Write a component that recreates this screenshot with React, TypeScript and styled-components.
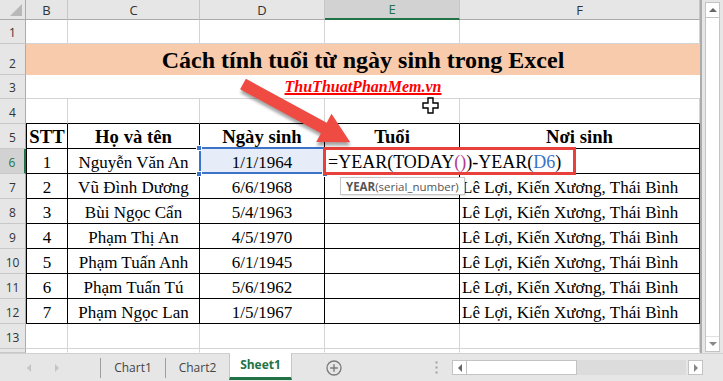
import React from 'react';
import styled, { createGlobalStyle, css } from 'styled-components';

const GRID = '#d4d4d4';
const HEAD_LINE = '#ababab';
const GREEN = '#217346';
const REF_BLUE = '#3b73c9';
const MARK_RED = '#e8403b';

const GlobalStyle = createGlobalStyle`
  html, body {
    margin: 0;
    padding: 0;
  }
  body {
    background: #e6e6e6;
    overflow: hidden;
  }
  * {
    box-sizing: border-box;
  }
`;

const Window = styled.div`
  display: flex;
  flex-direction: column;
  width: 723px;
  height: 381px;
  overflow: hidden;
  background: #e6e6e6;
`;

const Workspace = styled.div`
  display: flex;
  height: 353px;
`;

const Sheet = styled.div`
  position: relative;
  display: grid;
  grid-template-columns: 26px 42px 132px 125px 135px 240px;
  grid-template-rows: 20px 24px 31px 24px 25px repeat(8, 25px) 25px 4px;
  width: 702px;
  height: 353px;
  background: #fff;
  border-right: 2px solid ${HEAD_LINE};
  overflow: hidden;
`;

const Corner = styled.div`
  background: #e6e6e6;
  border-right: 1px solid ${HEAD_LINE};
  border-bottom: 1px solid ${HEAD_LINE};
`;

const ColHead = styled.div<{ $active?: boolean }>`
  display: flex;
  align-items: center;
  justify-content: center;
  background: ${(p) => (p.$active ? '#d2d2d2' : '#e6e6e6')};
  border-right: 1px solid #c6c6c6;
  border-bottom: ${(p) => (p.$active ? `2px solid ${GREEN}` : `1px solid ${HEAD_LINE}`)};
  color: ${(p) => (p.$active ? GREEN : '#333')};
  font-family: 'Open Sans', 'Noto Sans', sans-serif;
  font-size: 13px;
`;

const RowHead = styled.div<{ $active?: boolean }>`
  display: flex;
  align-items: flex-end;
  justify-content: center;
  padding-bottom: 2px;
  background: ${(p) => (p.$active ? '#d2d2d2' : '#e6e6e6')};
  border-right: ${(p) => (p.$active ? `2px solid ${GREEN}` : `1px solid ${HEAD_LINE}`)};
  border-bottom: 1px solid #c8c8c8;
  color: ${(p) => (p.$active ? GREEN : '#333')};
  font-family: 'Open Sans', 'Noto Sans', sans-serif;
  font-size: 12px;
`;

type Line = 'grid' | 'ink' | 'none';
const lineColor = (l?: Line) =>
  l === 'ink' ? '#000' : l === 'none' ? 'transparent' : GRID;

const Cell = styled.div<{
  $r?: Line;
  $b?: Line;
  $l?: boolean;
  $align?: 'left' | 'center';
  $head?: boolean;
  $picked?: boolean;
}>`
  display: flex;
  align-items: flex-end;
  justify-content: ${(p) => (p.$align === 'left' ? 'flex-start' : 'center')};
  padding: 0 2px;
  border-right: 1px solid ${(p) => lineColor(p.$r)};
  border-bottom: 1px solid ${(p) => lineColor(p.$b)};
  border-left: ${(p) => (p.$l ? '1px solid #000' : 'none')};
  font-family: 'Liberation Serif', 'Times New Roman', serif;
  font-size: ${(p) => (p.$head ? '18.7px' : '17px')};
  font-weight: ${(p) => (p.$head ? 700 : 400)};
  color: #000;
  white-space: nowrap;
  overflow: hidden;

  ${(p) =>
    p.$picked &&
    css`
      position: relative;
      z-index: 2;
      overflow: visible;
      background: #e6edf8;
    `}
`;

const TitleCell = styled.div`
  grid-column: 2 / span 5;
  display: flex;
  align-items: flex-end;
  justify-content: center;
  padding-bottom: 1px;
  background: #f8cbad;
  font-family: 'Liberation Serif', 'Times New Roman', serif;
  font-size: 24px;
  font-weight: 700;
  color: #000;
`;

const BannerCell = styled.div`
  grid-column: 2 / span 5;
  display: flex;
  align-items: flex-end;
  justify-content: center;
  padding-bottom: 2px;
  border-bottom: 1px solid ${GRID};
`;

const SiteMark = styled.span`
  font-family: 'Liberation Serif', 'Times New Roman', serif;
  font-size: 16px;
  font-weight: 700;
  font-style: italic;
  color: #f00;
  text-decoration: underline;
  text-decoration-thickness: 1.5px;
`;

const RefBox = styled.div`
  position: absolute;
  left: -1px;
  top: -2px;
  right: -1px;
  bottom: -1px;
  border: 2px solid ${REF_BLUE};
  pointer-events: none;
`;

const Handle = styled.span<{ $x: 'left' | 'right'; $y: 'top' | 'bottom' }>`
  position: absolute;
  ${(p) => p.$x}: -4px;
  ${(p) => p.$y}: -4px;
  width: 6px;
  height: 6px;
  background: ${REF_BLUE};
  border: 1px solid #fff;
`;

const EditCell = styled(Cell)`
  position: relative;
  z-index: 3;
  overflow: visible;
`;

const EditText = styled.div`
  position: absolute;
  left: 0;
  top: 0;
  bottom: 0;
  width: 247px;
  display: flex;
  align-items: flex-end;
  padding-left: 3px;
  background: #fff;
  font-family: 'Liberation Serif', 'Times New Roman', serif;
  font-size: 18px;
  color: #000;
  white-space: nowrap;
`;

const Paren = styled.span`
  color: #b23a8f;
`;

const RefText = styled.span`
  color: ${REF_BLUE};
`;

const MarkBox = styled.div`
  position: absolute;
  left: -2px;
  top: -2px;
  width: 253px;
  height: 28px;
  border: 3px solid ${MARK_RED};
  pointer-events: none;
`;

const ArgTip = styled.div`
  position: absolute;
  left: 15px;
  top: 28px;
  height: 18px;
  padding: 0 5px;
  display: flex;
  align-items: center;
  background: #fff;
  border: 1px solid #c6c6c6;
  box-shadow: 1px 1px 2px rgba(0, 0, 0, 0.12);
  font-family: 'Open Sans', 'Noto Sans', sans-serif;
  font-size: 11.5px;
  color: #555;

  b {
    font-weight: 700;
  }
`;

const ArrowMark = styled.svg`
  position: absolute;
  left: 230px;
  top: 68px;
  z-index: 5;
  pointer-events: none;
`;

const CellCursor = styled.svg`
  position: absolute;
  left: 422px;
  top: 97px;
  z-index: 5;
`;

const VScroll = styled.div`
  width: 21px;
  padding: 2px 3px 1px;
  display: flex;
  background: #e6e6e6;
`;

const VTrack = styled.div`
  flex: 1;
  display: flex;
  flex-direction: column;
  justify-content: space-between;
  background: #fff;
  border: 1px solid #c3c3c3;
`;

const VButton = styled.div<{ $end?: boolean }>`
  height: 15px;
  display: flex;
  align-items: center;
  justify-content: center;
  ${(p) =>
    p.$end
      ? css`
          border-top: 1px solid #e0e0e0;
        `
      : css`
          border-bottom: 1px solid #c3c3c3;
        `}
`;

type Dir = 'up' | 'down' | 'left' | 'right';
const Tri = styled.span<{ $dir: Dir; $tone?: string }>`
  width: 0;
  height: 0;
  ${({ $dir, $tone = '#666' }) => {
    const t = 'transparent';
    switch ($dir) {
      case 'up':
        return css`
          border-left: 4px solid ${t};
          border-right: 4px solid ${t};
          border-bottom: 4px solid ${$tone};
        `;
      case 'down':
        return css`
          border-left: 4px solid ${t};
          border-right: 4px solid ${t};
          border-top: 4px solid ${$tone};
        `;
      case 'left':
        return css`
          border-top: 4px solid ${t};
          border-bottom: 4px solid ${t};
          border-right: 4px solid ${$tone};
        `;
      default:
        return css`
          border-top: 4px solid ${t};
          border-bottom: 4px solid ${t};
          border-left: 4px solid ${$tone};
        `;
    }
  }}
`;

const TabBar = styled.div`
  display: flex;
  align-items: stretch;
  height: 28px;
  background: #e6e6e6;
  border-top: 1px solid #d0d0d0;
  font-family: 'Open Sans', 'Noto Sans', sans-serif;
  font-size: 12px;
  color: #444;
`;

const SheetNav = styled.div`
  width: 100px;
  display: flex;
  align-items: center;
  gap: 24px;
  padding-left: 27px;
`;

const TabDivider = styled.div`
  width: 1px;
  margin: 4px 0 3px;
  background: #9e9e9e;
`;

const Tab = styled.div<{ $w: number }>`
  width: ${(p) => p.$w}px;
  display: flex;
  align-items: center;
  justify-content: center;
  padding-bottom: 1px;
`;

const ActiveTab = styled(Tab)`
  margin-top: -1px;
  margin-bottom: 1px;
  background: #fff;
  border-left: 1px solid #c6c6c6;
  border-right: 1px solid #c6c6c6;
  border-bottom: 3px solid ${GREEN};
  color: ${GREEN};
  font-weight: 700;
`;

const AddSheet = styled.div`
  width: 84px;
  display: flex;
  align-items: center;
  justify-content: center;
`;

const SplitDots = styled.div`
  width: 76px;
  display: flex;
  align-items: center;
  justify-content: flex-end;
  padding-right: 14px;
`;

const HScroll = styled.div`
  width: 251px;
  height: 15px;
  align-self: center;
  display: flex;
`;

const HButton = styled.div<{ $gap?: boolean }>`
  width: 15px;
  display: flex;
  align-items: center;
  justify-content: center;
  background: #fff;
  border: 1px solid #c3c3c3;
  margin-left: ${(p) => (p.$gap ? '2px' : '0')};
`;

const HThumb = styled.div`
  width: 110px;
  background: #fff;
  border: 1px solid #c3c3c3;
  border-left: none;
`;

const HTrack = styled.div`
  flex: 1;
  background: #dcdcdc;
`;

const columns = ['B', 'C', 'D', 'E', 'F'];
const headings = ['STT', 'Họ và tên', 'Ngày sinh', 'Tuổi', 'Nơi sinh'];
const HOMETOWN = 'Lê Lợi, Kiến Xương, Thái Bình';

const people = [
  { no: '1', name: 'Nguyễn Văn An', born: '1/1/1964' },
  { no: '2', name: 'Vũ Đình Dương', born: '6/6/1968' },
  { no: '3', name: 'Bùi Ngọc Cẩn', born: '5/4/1963' },
  { no: '4', name: 'Phạm Thị An', born: '4/5/1970' },
  { no: '5', name: 'Phạm Tuấn Anh', born: '6/1/1945' },
  { no: '6', name: 'Phạm Tuấn Tú', born: '5/6/1962' },
  { no: '7', name: 'Phạm Ngọc Lan', born: '1/5/1967' },
];

// mũi tên đỏ chỉ vào ô công thức
const ARROW_LEN = 122;
const arrowPoints = [
  [0, -6],
  [ARROW_LEN - 30, -6],
  [ARROW_LEN - 30, -16],
  [ARROW_LEN, 0],
  [ARROW_LEN - 30, 16],
  [ARROW_LEN - 30, 6],
  [0, 6],
]
  .map((p) => p.join(','))
  .join(' ');

const FormulaCell = () => (
  <EditCell $r="ink" $b="ink">
    <EditText>
      =YEAR(TODAY<Paren>()</Paren>)-YEAR(<RefText>D6</RefText>)
    </EditText>
    <MarkBox />
    <ArgTip>
      <b>YEAR</b>(serial_number)
    </ArgTip>
  </EditCell>
);

const PickedDate = ({ value }: { value: string }) => (
  <Cell $r="ink" $b="ink" $picked>
    {value}
    <RefBox />
    <Handle $x="left" $y="top" />
    <Handle $x="left" $y="bottom" />
    <Handle $x="right" $y="bottom" />
  </Cell>
);

const SheetGrid = () => (
  <Sheet>
    <Corner>
      <svg width="26" height="20">
        <polygon points="10,16 22,16 22,4" fill="#b8b8b8" />
      </svg>
    </Corner>
    {columns.map((c) => (
      <ColHead key={c} $active={c === 'E'}>
        {c}
      </ColHead>
    ))}

    <RowHead>1</RowHead>
    {columns.map((c) => (
      <Cell key={`1${c}`} />
    ))}

    <RowHead>2</RowHead>
    <TitleCell>Cách tính tuổi từ ngày sinh trong Excel</TitleCell>

    <RowHead>3</RowHead>
    <BannerCell>
      <SiteMark>ThuThuatPhanMem.vn</SiteMark>
    </BannerCell>

    <RowHead>4</RowHead>
    {columns.map((c) => (
      <Cell key={`4${c}`} $b="ink" />
    ))}

    <RowHead>5</RowHead>
    {headings.map((h, i) => (
      <Cell key={h} $head $l={i === 0} $r="ink" $b="ink">
        {h}
      </Cell>
    ))}

    {people.map((p, i) => {
      const first = i === 0;
      return (
        <React.Fragment key={p.no}>
          <RowHead $active={first}>{i + 6}</RowHead>
          <Cell $l $r="ink" $b="ink">
            {p.no}
          </Cell>
          <Cell $r="ink" $b="ink">
            {p.name}
          </Cell>
          {first ? (
            <PickedDate value={p.born} />
          ) : (
            <Cell $r="ink" $b="ink">
              {p.born}
            </Cell>
          )}
          {first ? <FormulaCell /> : <Cell $r="ink" $b="ink" />}
          <Cell $r="ink" $b="ink" $align="left">
            {first ? '' : HOMETOWN}
          </Cell>
        </React.Fragment>
      );
    })}

    <RowHead>13</RowHead>
    {columns.map((c) => (
      <Cell key={`13${c}`} />
    ))}

    <RowHead />
    {columns.map((c) => (
      <Cell key={`14${c}`} $b="none" />
    ))}

    <ArrowMark width="130" height="84" viewBox="0 0 130 84">
      <defs>
        <filter id="arrowShade" x="-20%" y="-40%" width="140%" height="180%">
          <feGaussianBlur stdDeviation="1.5" />
        </filter>
      </defs>
      <g transform="translate(13 16) rotate(28.5)">
        <polygon
          points={arrowPoints}
          fill="rgba(0,0,0,0.35)"
          transform="translate(2 3)"
          filter="url(#arrowShade)"
        />
        <polygon points={arrowPoints} fill="#ef4b42" />
      </g>
    </ArrowMark>

    <CellCursor width="17" height="17" viewBox="0 0 17 17">
      <polygon
        points="6,1 11,1 11,6 16,6 16,11 11,11 11,16 6,16 6,11 1,11 1,6 6,6"
        fill="#fff"
        stroke="#000"
        strokeWidth="1.4"
      />
    </CellCursor>
  </Sheet>
);

const SheetTabs = () => (
  <TabBar>
    <SheetNav>
      <Tri $dir="left" $tone="#c4c4c4" />
      <Tri $dir="right" $tone="#c4c4c4" />
    </SheetNav>
    <TabDivider />
    <Tab $w={64}>Chart1</Tab>
    <TabDivider />
    <Tab $w={63}>Chart2</Tab>
    <ActiveTab $w={63}>Sheet1</ActiveTab>
    <AddSheet>
      <svg width="16" height="16" viewBox="0 0 16 16">
        <circle cx="8" cy="8" r="7" fill="none" stroke="#7a7a7a" strokeWidth="1.3" />
        <path d="M8 4.2v7.6M4.2 8h7.6" stroke="#7a7a7a" strokeWidth="1.4" />
      </svg>
    </AddSheet>
    <SplitDots>
      <svg width="3" height="13" viewBox="0 0 3 13">
        <rect x="0.5" y="0.5" width="2" height="2" fill="#a0a0a0" />
        <rect x="0.5" y="5.5" width="2" height="2" fill="#a0a0a0" />
        <rect x="0.5" y="10.5" width="2" height="2" fill="#a0a0a0" />
      </svg>
    </SplitDots>
    <HScroll>
      <HButton>
        <Tri $dir="left" $tone="#666" />
      </HButton>
      <HThumb />
      <HTrack />
      <HButton $gap>
        <Tri $dir="right" $tone="#888" />
      </HButton>
    </HScroll>
  </TabBar>
);

export default function App() {
  return (
    <>
      <GlobalStyle />
      <Window>
        <Workspace>
          <SheetGrid />
          <VScroll>
            <VTrack>
              <VButton>
                <Tri $dir="up" $tone="#666" />
              </VButton>
              <VButton $end>
                <Tri $dir="down" $tone="#888" />
              </VButton>
            </VTrack>
          </VScroll>
        </Workspace>
        <SheetTabs />
      </Window>
    </>
  );
}
